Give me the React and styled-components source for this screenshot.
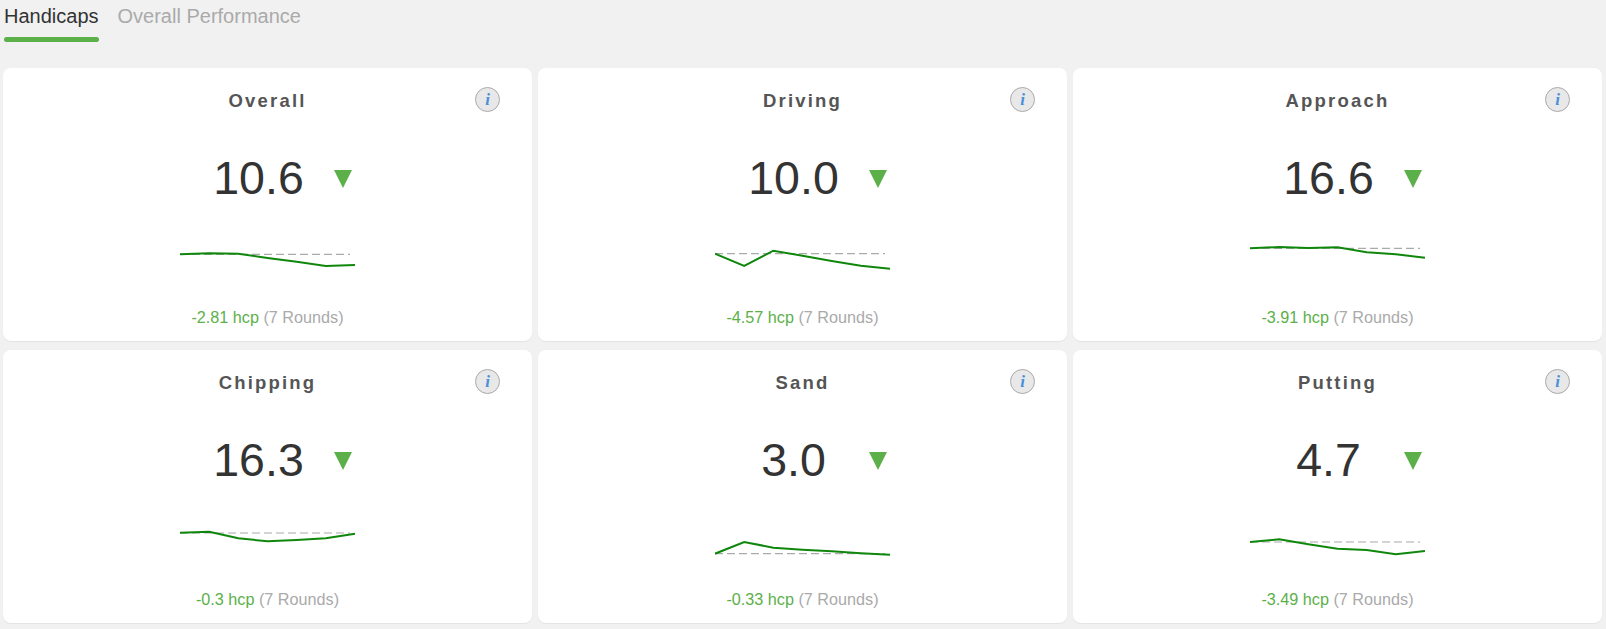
import React from 'react';
import styled, { createGlobalStyle } from 'styled-components';

const GlobalStyle = createGlobalStyle`
    html, body {
        margin: 0;
        padding: 0;
        background: #f1f1f1;
        font-family: "Liberation Sans", Arial, sans-serif;
    }
`

const Page = styled.div`
    width: 1606px;
    height: 629px;
    overflow: hidden;
`

const Tabs = styled.div`
    display: flex;
    gap: 19px;
    height: 68px;
    padding-left: 4px;
    box-sizing: border-box;
`

const Tab = styled.div`
    display: flex;
    flex-direction: column;
    gap: 5px;
    font-size: 20px;
    line-height: 32px;
    color: ${props => props.$active ? '#333' : '#aaa'};
`

const TabBar = styled.div`
    height: 5px;
    border-radius: 3px;
    background: #5cb04a;
`

const Grid = styled.div`
    display: grid;
    grid-template-columns: repeat(3, 1fr);
    gap: 9px 6px;
    padding: 0 4px 0 3px;
`

const Card = styled.div`
    position: relative;
    display: flex;
    flex-direction: column;
    align-items: center;
    height: 273px;
    background: #fff;
    border-radius: 8px;
    box-shadow: 0 1px 1px rgba(0, 0, 0, 0.06);
`

const Title = styled.div`
    margin-top: 21px;
    font-size: 18.5px;
    line-height: 24px;
    font-weight: bold;
    letter-spacing: 2.2px;
    color: #555;
`

const InfoButton = styled.div`
    position: absolute;
    top: 19px;
    right: 32px;
    width: 25px;
    height: 25px;
    box-sizing: border-box;
    border: 1px solid #aaa;
    border-radius: 50%;
    background: #e8e8e8;
    display: flex;
    align-items: center;
    justify-content: center;
    font-family: "Liberation Serif", serif;
    font-style: italic;
    font-weight: bold;
    font-size: 17px;
    color: #4a90d9;
`

const ValueRow = styled.div`
    display: flex;
    align-items: center;
    gap: 1px;
    height: 60px;
    margin-top: 35px;
    padding-left: 1px;
`

const Value = styled.div`
    width: 148px;
    text-align: center;
    font-size: 46.5px;
    line-height: 62px;
    color: #333;
`

const ArrowDown = styled.div`
    width: 0;
    height: 0;
    margin-top: 1px;
    border-left: 9px solid transparent;
    border-right: 9px solid transparent;
    border-top: 18px solid #5cb04a;
`

const ChartSvg = styled.svg`
    display: block;
    margin-top: 32px;
`

const Footer = styled.div`
    margin-top: 17px;
    font-size: 16.2px;
    line-height: 20px;
    color: #aaa;
`

const Delta = styled.span`
    color: #5cb04a;
`

function Sparkline({ points, base }) {
    const step = 175 / 6;
    const line = points.map((y, i) => `${(i * step).toFixed(1)},${y}`).join(' ');

    return (
        <ChartSvg width="176" height="50" viewBox="0 0 176 50">
            <line x1="0" y1={base} x2="170" y2={base} stroke="#aaa" strokeWidth="1.2" strokeDasharray="8 4" />
            <polyline points={line} fill="none" stroke="#0f870c" strokeWidth="2" />
        </ChartSvg>
    );
}

const stats = [
    { title: 'Overall', value: '10.6', delta: '-2.81', base: 14.3, points: [14.3, 13.3, 13.7, 18, 21.7, 26, 25] },
    { title: 'Driving', value: '10.0', delta: '-4.57', base: 13.7, points: [13.7, 26, 10.7, 15.7, 21, 25.7, 28.7] },
    { title: 'Approach', value: '16.6', delta: '-3.91', base: 8.3, points: [8.3, 7, 8, 7.3, 12.3, 14.3, 17.7] },
    { title: 'Chipping', value: '16.3', delta: '-0.3', base: 11, points: [10.7, 9.7, 16.3, 19.3, 18, 16.3, 11.7] },
    { title: 'Sand', value: '3.0', delta: '-0.33', base: 31.7, points: [31.7, 20, 25.7, 27.7, 29.3, 31.3, 32.7] },
    { title: 'Putting', value: '4.7', delta: '-3.49', base: 20, points: [20, 17.3, 22.3, 26.7, 28, 32.3, 29] },
];

export default function App() {
    return (
        <Page>
            <GlobalStyle />
            <Tabs>
                <Tab $active>
                    Handicaps
                    <TabBar />
                </Tab>
                <Tab>Overall Performance</Tab>
            </Tabs>
            <Grid>
                {
                    stats.map((item) => (
                        <Card key={item.title}>
                            <Title>{item.title}</Title>
                            <InfoButton>i</InfoButton>
                            <ValueRow>
                                <Value>{item.value}</Value>
                                <ArrowDown />
                            </ValueRow>
                            <Sparkline points={item.points} base={item.base} />
                            <Footer>
                                <Delta>{item.delta} hcp</Delta> (7 Rounds)
                            </Footer>
                        </Card>
                    ))
                }
            </Grid>
        </Page>
    );
}
